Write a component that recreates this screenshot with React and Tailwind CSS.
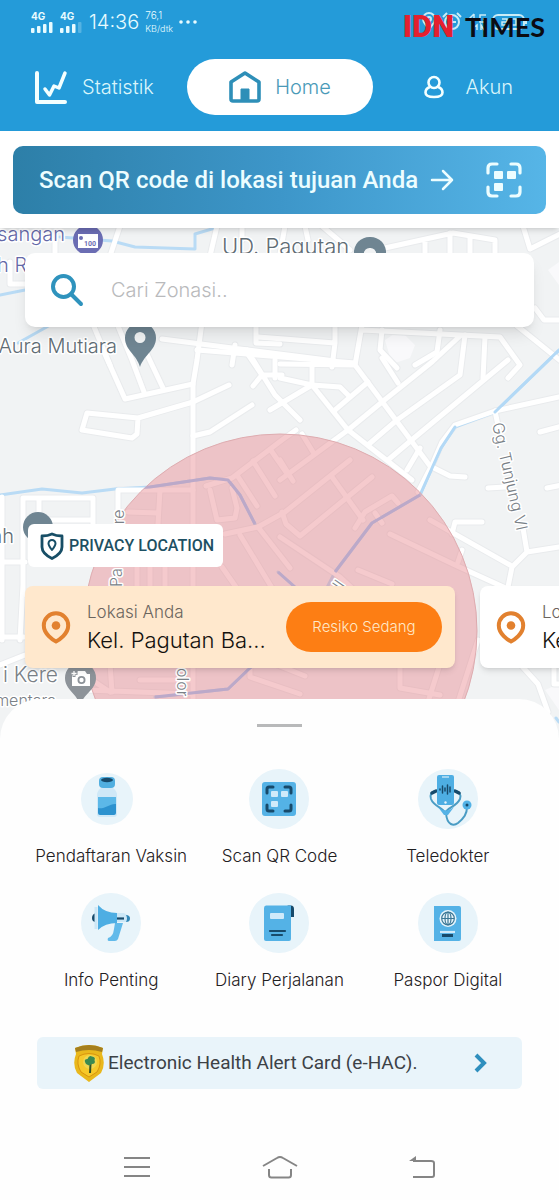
import React from "react";

const water = [
  "M0 495L42 489L82 493L115 489L150 487L210 478L228 480L240 495L255 524",
  "M575 335L495 412L455 427L441 448L420 495L372 523L335 572L300 640",
  "M60 237L112 241L135 247L195 249L195 234L215 228",
  "M0 295L30 289L60 270",
  "M18 343L52 324",
  "M155 697L228 689L250 668L300 630",
  "M278 572L296 588",
  "M556 718L559 722",
];

const roads = [
  "M104 352L125 399L193 384",
  "M118 326L132 360L144 392M92 322L110 365M145 350L163 388",
  "M202 322L197 360L193 384V740",
  "M229 385L193 402L138 418L87 413L82 430L132 438L137 434L138 418",
  "M193 436L210 432L252 405",
  "M23 595V498H93V524M39 498V524M39 520H93M0 562H25M2 497V640M23 585L20 640M0 637H24M0 665L25 655",
  "M118 512V490H193M160 490L158 524M128 512L158 513",
  "M162 339L335 361M256 325V343L280 344M235 345L232 365M197 350L355 363",
  "M258 337L335 343V325M335 343L332 367M275 360V378",
  "M253 386L262 375L245 350M247 350L275 395L300 420M262 375H282",
  "M280 364L355 365L430 466L450 476L465 477",
  "M362 325L355 365M362 330L500 337L520 365L508 378",
  "M382 330L380 350L397 368M440 330L437 352L415 365",
  "M465 335L460 375L397 420M485 337L483 378",
  "M280 378L312 385L340 387L348 395M312 385V366M270 410L312 385L348 430L412 480",
  "M335 410L368 382M280 480L348 430L382 402L432 362L460 336",
  "M369 444L397 420M388 460L414 438L508 360M407 470L420 448M382 358L398 383",
  "M559 397L495 411L455 425L442 442L432 465L418 492",
  "M495 411L500 435M523 528L527 552L559 547M527 552L512 567L507 592",
  "M452 534L455 522H482M430 520L510 565M390 534L455 565L510 590M462 550L458 562",
  "M540 432L562 426M488 488L505 487M547 488L562 485",
  "M385 248L453 233L495 240V254M425 240V254M450 233V254M470 236V254",
  "M285 226L280 254M305 226L308 240M322 226L350 250M523 226L530 249L562 233",
  "M535 308L544 320H562M516 325L562 362",
  "M120 226L110 256M217 226L210 256M242 226V240M55 240V254M10 262V284H28",
  "M206 486L232 478L282 440L296 430M237 475L257 506M253 461L275 496M270 449L286 472",
  "M210 490L217 520L235 518L237 508L232 488M225 534L258 527L285 512L350 460",
  "M240 535L272 588M258 527L290 568M222 567L238 590M282 512L286 524L300 536L372 477",
  "M332 477L363 520M355 528L365 512L392 496L398 503M375 513L382 523M280 537L340 577L365 600",
  "M302 434L313 452M280 460L293 481M358 570L392 584M165 566V590M137 566V590M150 566V590",
  "M110 664L112 692M85 690L192 694M140 680H192M92 680L110 692M250 665V677L300 694M275 664L305 676",
  "M400 664V688L440 695M440 664L428 702M478 640L458 702M520 664L538 684L548 712M554 664V684H562",
];

function CityMap() {
  return (
    <svg
      viewBox="0 228 559 510"
      preserveAspectRatio="xMidYMin slice"
      className="absolute inset-x-0 top-0 h-[510px] w-full bg-[#f1f3f4]"
      role="img"
      aria-label="Peta zonasi"
    >
      <defs>
        <clipPath id="zone"><circle cx="280" cy="631" r="197" /></clipPath>
      </defs>
      <path d="M385 340L400 330L415 345L410 358L392 364Z M548 270L559 262V285Z M545 690L559 684V710Z" fill="#f9f9fb" />
      <g fill="none" strokeLinejoin="round" strokeLinecap="round">
        <g stroke="#e9ebed" strokeWidth="7">
          {roads.map((d) => <path key={d} d={d} />)}
        </g>
        <g stroke="#b9dbf5" strokeWidth="3">
          {water.map((d) => <path key={d} d={d} />)}
        </g>
        <g stroke="#ffffff" strokeWidth="5">
          {roads.map((d) => <path key={d} d={d} />)}
        </g>
        <path d="M559 350L495 412M455 427L441 448L420 495" stroke="#b3d9f6" strokeWidth="3" />
      </g>
      <circle cx="280" cy="631" r="197" fill="#e8848b" fillOpacity="0.43" stroke="#deacb0" strokeWidth="1" />
      <g clipPath="url(#zone)" fill="none" stroke="#bba9c9" strokeWidth="3" strokeLinejoin="round">
        <path d={water[0]} />
        <path d="M420 495L372 523L335 572" />
        <path d={water[5]} />
        <path d={water[6]} />
      </g>
      <g fontFamily="Inter, sans-serif" fontWeight="300" fontSize="20" stroke="#ffffff" strokeWidth="3" paintOrder="stroke" strokeLinejoin="round">
        <text x="65" y="241" textAnchor="end" fill="#6468a8">sangan</text>
        <text x="-3" y="272" fill="#6468a8">h R</text>
        <text x="222" y="254" fontSize="22" fill="#5f6c74">UD. Pagutan</text>
        <text x="117" y="353" textAnchor="end" fill="#5f6c74">Aura Mutiara</text>
        <text x="14" y="543" textAnchor="end" fill="#5f6c74">ah</text>
        <text x="58" y="682" textAnchor="end" fontSize="21" fill="#7a8187">i Kere</text>
        <text x="56" y="706" textAnchor="end" fontSize="16" fill="#7a8187">mentara</text>
        <g fontSize="16" fill="#7a8187">
          <text transform="translate(122 587) rotate(-90)">Pa</text>
          <text transform="translate(124 528) rotate(-90)">ire</text>
          <text transform="translate(177 668) rotate(90)">olor</text>
          <text transform="translate(341 591) rotate(-55)">ll</text>
          <text transform="translate(492 424) rotate(77)">Gg. Tunjung VI</text>
        </g>
      </g>
      <circle cx="88" cy="240" r="15" fill="#6b6db3" />
      <rect x="78" y="234" width="20" height="14" fill="#fff" />
      <circle cx="81" cy="238" r="2" fill="#6b6db3" />
      <text x="84" y="246" fontSize="7" fontFamily="Roboto, sans-serif" fontWeight="700" fill="#6b6db3">100</text>
      <g fill="#6f8592">
        <path fillRule="evenodd" d="M140 367C137 355 125 350 125 338A15.500 15.500 0 0 1 156 338C156 350 144 355 140 367ZM140 343A5.500 5.500 0 1 0 140 332A5.500 5.500 0 0 0 140 343Z" />
        <path fillRule="evenodd" d="M370 237A15.500 15.500 0 0 1 386 254H354A15.500 15.500 0 0 1 370 237ZM370 248A5.500 5.500 0 0 0 364 254H376A5.500 5.500 0 0 0 370 248Z" />
        <circle cx="38" cy="527" r="15" />
      </g>
      <path d="M80 706C78 694 65 690 65 678A15.500 15.500 0 0 1 96 678C96 690 83 694 80 706Z" fill="#8d9399" />
      <path fillRule="evenodd" d="M72 674H76L78 671H85L87 674H90V686H72ZM81.500 684A4 4 0 1 0 81.500 676A4 4 0 0 0 81.500 684Z" fill="#fff" />
      <circle cx="81.500" cy="680" r="2.200" fill="#fff" />
      <path d="M74 670V677M70.500 673.500H77.500" stroke="#8d9399" strokeWidth="3" />
      <path d="M74 671V676M71.500 673.500H76.500" stroke="#fff" strokeWidth="1.300" />
    </svg>
  );
}

function Signal({ weak }) {
  return (
    <span className="flex flex-col gap-px">
      <span className="text-[10px] leading-[10px] font-bold">4G</span>
      <svg viewBox="0 0 23 11" className="h-[11px] w-[23px]" fill="currentColor">
        <rect x="0" y="6" width="3.500" height="5" rx="1" />
        <rect x="6" y="4" width="3.500" height="7" rx="1" />
        <rect x="12" y="2" width="3.500" height="9" rx="1" />
        <rect x="18" y="0" width="3.500" height="11" rx="1" opacity={weak ? 0.25 : 1} />
      </svg>
    </span>
  );
}

function StatusBar() {
  return (
    <div className="relative flex h-11 items-center px-[31px] text-[#e8fbff]">
      <div className="flex items-center gap-[6px]">
        <Signal />
        <Signal weak />
        <span className="text-[20px] leading-6 font-light">14:36</span>
        <span className="flex flex-col text-[9px] leading-[14px] font-light">
          <span className="text-[10px]">76,1</span>
          <span>KB/dtk</span>
        </span>
        <svg viewBox="0 0 18 4" className="h-1 w-[18px]" fill="currentColor">
          <circle cx="2" cy="2" r="1.800" /><circle cx="9" cy="2" r="1.800" /><circle cx="16" cy="2" r="1.800" />
        </svg>
      </div>
      <svg viewBox="0 0 108 22" className="ml-auto h-[22px] w-[108px]" fill="none" stroke="#c9ecf6" strokeWidth="2">
        <path d="M9 19C7 14 3 13 3 8A6 6 0 0 1 15 8C15 13 11 14 9 19Z" />
        <circle cx="9" cy="8" r="2" />
        <circle cx="32" cy="11" r="7" />
        <path d="M32 7V11H36M23 6L27 2M37 2L41 6" />
        <path d="M54 3L48 9H55M54 3V12M66 4H60V11H66V8H63M53 17L57 14V19M61 19V14L64 19" strokeWidth="1.500" />
        <rect x="73" y="4" width="31" height="14" rx="5" />
        <path d="M106 9V13" />
        <path d="M82 8H87V11H82V14H87M91 8H96V14H91Z" strokeWidth="1.500" />
      </svg>
      <div className="absolute top-[11px] right-[14px] flex items-center gap-[11px] leading-8">
        <span className="font-[Roboto] text-[31px] font-black text-[#e4202f]">IDN</span>
        <span className="font-[Lato] text-[27px] font-bold text-[#0b0b12]">TIMES</span>
      </div>
    </div>
  );
}

function TopNav() {
  return (
    <nav className="grid grid-cols-[1fr_186px_1fr] items-center px-[34px] pt-[15px] pb-4 text-[20px] font-light text-[#d9f5fb]">
      <a href="#statistik" className="flex items-center gap-[14px]">
        <svg viewBox="0 0 34 34" className="size-[34px]" fill="none" stroke="#f3ffff" strokeWidth="4" strokeLinecap="round" strokeLinejoin="round">
          <path d="M3 3V32H31" />
          <path d="M11 19L15.500 25L20 16L25 18L31 3" strokeWidth="3.500" />
        </svg>
        Statistik
      </a>
      <a href="#home" className="flex h-14 items-center justify-center gap-[13px] rounded-full bg-white text-[#4a9ab8]">
        <svg viewBox="0 0 34 34" className="size-[34px]" fill="none" stroke="#2e8fb8" strokeWidth="3.600" strokeLinejoin="round">
          <path d="M3 12L17 3L31 12V29Q31 31 29 31H5Q3 31 3 29Z" />
          <path d="M13 31V19H21V31Z" fill="#2e8fb8" strokeWidth="1" />
        </svg>
        Home
      </a>
      <a href="#akun" className="flex items-center justify-end gap-5 pr-3">
        <svg viewBox="0 0 22 24" className="h-6 w-[22px]" fill="none" stroke="#f3ffff" strokeWidth="2.600">
          <circle cx="11" cy="7.500" r="5.500" />
          <path d="M7 12C4 13 2.500 15 2.500 17.500C2.500 20.500 6 22 11 22S19.500 20.500 19.500 17.500C19.500 15 18 13 15 12" />
        </svg>
        Akun
      </a>
    </nav>
  );
}

function ScanBanner() {
  return (
    <div className="relative z-10 bg-white px-[13px] pt-[15px] pb-[14px] shadow-md">
      <button className="flex h-[68px] w-full items-center rounded-[10px] bg-linear-to-r from-[#2d7fa8] via-[#3d96c9] to-[#56b5e7] pr-[23px] pl-[26px] font-[Roboto] text-[24px] font-medium text-[#ecfdff]">
        <span className="whitespace-nowrap">Scan QR code di lokasi tujuan Anda</span>
        <svg viewBox="0 0 24 22" className="ml-3 h-[22px] w-6 shrink-0" fill="none" stroke="currentColor" strokeWidth="2.500" strokeLinecap="round" strokeLinejoin="round">
          <path d="M2 11H22M13 2L22 11L13 20" />
        </svg>
        <svg viewBox="0 0 38 38" className="ml-auto size-[38px] shrink-0" fill="none" stroke="currentColor" strokeWidth="3.200" strokeLinecap="round">
          <path d="M3 12V7Q3 3 7 3H12M26 3H31Q35 3 35 7V12M35 26V31Q35 35 31 35H26M12 35H7Q3 35 3 31V26" />
          <g fill="currentColor" stroke="none">
            <rect x="9" y="10" width="9" height="8" rx="1" /><rect x="22" y="10" width="9" height="8" rx="1" /><rect x="9" y="22" width="9" height="8" rx="1" />
          </g>
        </svg>
      </button>
    </div>
  );
}

function OrangePin() {
  return (
    <svg viewBox="0 0 30 33" className="h-[33px] w-[30px] shrink-0" fill="none">
      <path d="M15 30.500C12 29 2.800 23 2.800 14.500A12.200 12.200 0 0 1 27.200 14.500C27.200 23 18 29 15 30.500Z" stroke="#e2812f" strokeWidth="4" strokeLinejoin="round" />
      <circle cx="15" cy="14.500" r="4.300" fill="#e2812f" />
    </svg>
  );
}

function LocationCard({ active, title, name, risk }) {
  return (
    <li className={`flex h-[82px] w-[430px] shrink-0 items-center rounded-lg pr-[13px] pl-4 shadow-md ${active ? "bg-[#ffe8cd]" : "bg-white"}`}>
      <OrangePin />
      <div className="ml-4 min-w-0 flex-1 pt-[2px]">
        <p className="text-[17px] leading-6 font-light text-[#6b655e]">{title}</p>
        <p className="text-[22px] leading-8 font-light whitespace-nowrap text-[#14110e]">{name}</p>
      </div>
      {risk && (
        <button className="ml-3 h-[50px] w-[156px] shrink-0 rounded-full bg-[#fd7e14] text-[15px] font-light text-[#ffe9c9]">{risk}</button>
      )}
    </li>
  );
}

function MapSection() {
  return (
    <section className="relative overflow-x-clip">
      <CityMap />
      <div className="relative flex flex-col items-start pt-[25px] pb-[31px]">
        <label className="mx-[25px] flex h-[74px] items-center gap-[27px] self-stretch rounded-[10px] bg-white pr-4 pl-[25px] shadow-lg">
          <svg viewBox="0 0 34 34" className="size-[34px] shrink-0" fill="none" stroke="#2f93bd" strokeWidth="4" strokeLinecap="round">
            <circle cx="13.500" cy="13.500" r="10.500" />
            <path d="M21 21L31 31" />
          </svg>
          <span className="sr-only">Cari zonasi</span>
          <input type="text" placeholder="Cari Zonasi.." className="min-w-0 flex-1 text-[20px] font-light text-gray-700 outline-none placeholder:text-[#b9babc]" />
        </label>
        <button className="mt-[197px] ml-7 flex h-[43px] items-center gap-[5px] rounded-md bg-white pr-[9px] pl-3 font-[Roboto] text-[16px] font-medium text-[#1d5063]">
          <svg viewBox="0 0 24 28" className="h-7 w-6" fill="none" stroke="#174e66" strokeWidth="2.800" strokeLinejoin="round">
            <path d="M12 2C9 3.500 5 4 2 4V15C2 21 7 24 12 26.500C17 24 22 21 22 15V4C19 4 15 3.500 12 2Z" />
            <path d="M12 18C10 15.500 8.500 13.500 8.500 11.500A3.500 3.500 0 0 1 15.500 11.500C15.500 13.500 14 15.500 12 18Z" strokeWidth="2" />
          </svg>
          PRIVACY LOCATION
        </button>
        <ul className="mt-[19px] flex gap-[25px] pl-[25px]">
          <LocationCard active title="Lokasi Anda" name="Kel. Pagutan Ba..." risk="Resiko Sedang" />
          <LocationCard title="Lokasi" name="Kel." />
        </ul>
      </div>
    </section>
  );
}

function VaccineIcon() {
  return (
    <svg viewBox="0 0 60 60" className="size-[60px]">
      <circle cx="26" cy="30" r="26" fill="#e8f4fa" />
      <rect x="18" y="8" width="16" height="11" rx="4" fill="#51afe0" />
      <ellipse cx="26" cy="11" rx="6" ry="2.200" fill="#174a6b" />
      <path d="M20 19H32Q36 22 36 26V45Q36 48 33 48H19Q16 48 16 45V26Q16 22 20 19Z" fill="#cfe8f7" />
      <path d="M17 28H35V44Q35 46 33 46H19Q17 46 17 44Z" fill="#2c92cf" />
      <path d="M17 28H35V35C29 34 23 41 17 39Z" fill="#5cb8e8" />
    </svg>
  );
}

function QrIcon() {
  return (
    <svg viewBox="0 0 60 60" className="size-[60px]">
      <circle cx="30" cy="30" r="30" fill="#e8f4fa" />
      <rect x="13" y="13" width="34" height="34" rx="3" fill="#54b2e6" />
      <path d="M18 24V20Q18 18 20 18H24M36 18H40Q42 18 42 20V24M42 36V40Q42 42 40 42H36M24 42H20Q18 42 18 40V36" fill="none" stroke="#174a6b" strokeWidth="3" strokeLinecap="round" />
      <g fill="#cfeafa"><rect x="22" y="22" width="7" height="6" rx="1" /><rect x="32" y="22" width="7" height="6" rx="1" /><rect x="22" y="32" width="7" height="6" rx="1" /></g>
    </svg>
  );
}

function DoctorIcon() {
  return (
    <svg viewBox="0 0 60 60" className="size-[60px]">
      <circle cx="30" cy="30" r="30" fill="#e8f4fa" />
      <g fill="none" stroke="#4a9cc4" strokeWidth="2" strokeLinecap="round" strokeLinejoin="round">
        <path d="M17 22Q11 24 13 30C16 38 25 38 27 44C30 38 38 38 42 30Q44 24 38 22" />
        <path d="M28 44C29 57 36 57 40 54C46 49 49 45 49 38" />
      </g>
      <path d="M20 38Q28 45 36 38L30 46H26Z" fill="#54b2e6" />
      <path d="M14 24L18 22M37 22L41 24" stroke="#174a6b" strokeWidth="3.500" strokeLinecap="round" />
      <rect x="19" y="6" width="17" height="30" rx="2" fill="#4eaee3" />
      <path d="M24 8H31" stroke="#d8effa" strokeWidth="1.200" />
      <circle cx="27.500" cy="33.500" r="1.200" fill="#e6f4fb" />
      <path d="M22 20V21M24.500 17V24M27 19V22M29.500 16V25M32 18V23" stroke="#174a6b" strokeWidth="1.500" strokeLinecap="round" />
      <circle cx="49" cy="36" r="4.500" fill="#54b2e6" />
      <circle cx="49" cy="36" r="1.500" fill="#174a6b" />
    </svg>
  );
}

function MegaphoneIcon() {
  return (
    <svg viewBox="0 0 60 60" className="size-[60px]">
      <circle cx="30" cy="30" r="30" fill="#e8f4fa" />
      <path d="M15 20Q11 21 11 25T15 29Z" fill="#174a6b" />
      <path d="M34 30H42L37 46Q36 48 34 48H28Q26 48 27 45Q32 44 33 36Z" fill="#62baea" />
      <path d="M15 14V36" stroke="#cce7f6" strokeWidth="3" />
      <path d="M17 12Q24 20 36 20V30Q24 30 17 37Z" fill="#4eaee3" />
      <path d="M36 20H43L46 22V29H36Z" fill="#cce7f6" />
      <path d="M36 25.500H43" stroke="#174a6b" strokeWidth="2.200" />
      <path d="M45 22Q49 22 49 25.500T45 29Q47 25.500 45 22Z" fill="#3388b8" />
    </svg>
  );
}

function DiaryIcon() {
  return (
    <svg viewBox="0 0 60 60" className="size-[60px]">
      <circle cx="30" cy="30" r="30" fill="#e8f4fa" />
      <path d="M38 12.500H42Q45 12.500 45 16V24H41V16Q41 13 38 12.500Z" fill="#174a6b" />
      <path d="M17 12.500H42V46Q42 48 40 48H17Q15 48 15 46V15Q15 12.500 17 12.500Z" fill="#54b2e6" />
      <rect x="21" y="20" width="14" height="6" rx="1" fill="#cfeafa" />
      <path d="M21 38H36M23 42H33" stroke="#174a6b" strokeWidth="2.200" strokeLinecap="round" />
    </svg>
  );
}

function PassportIcon() {
  return (
    <svg viewBox="0 0 60 60" className="size-[60px]">
      <circle cx="30" cy="30" r="30" fill="#e8f4fa" />
      <path d="M16 13H41Q43 13 43 15V46Q43 48 41 48H16Z" fill="#54b2e6" />
      <circle cx="30" cy="25.500" r="8.500" fill="#e6f4fb" />
      <g fill="none" stroke="#3b7795" strokeWidth="1.200"><circle cx="30" cy="25.500" r="6.300" /><ellipse cx="30" cy="25.500" rx="3" ry="6.300" /><path d="M24 25.500H36M30 19V32" /></g>
      <path d="M22 39H37" stroke="#cfeafa" strokeWidth="2.200" />
      <path d="M24 42.500H35" stroke="#174a6b" strokeWidth="3" />
    </svg>
  );
}

const services = [
  { label: "Pendaftaran Vaksin", Icon: VaccineIcon },
  { label: "Scan QR Code", Icon: QrIcon },
  { label: "Teledokter", Icon: DoctorIcon },
  { label: "Info Penting", Icon: MegaphoneIcon },
  { label: "Diary Perjalanan", Icon: DiaryIcon },
  { label: "Paspor Digital", Icon: PassportIcon },
];

function Crest() {
  return (
    <svg viewBox="0 0 32 38" className="h-[38px] w-8 shrink-0">
      <path d="M2 4Q16 -2 30 4L29 10Q33 20 28 29L16 38L4 29Q-1 20 3 10Z" fill="#e9b81c" />
      <path d="M2 4Q16 -2 30 4L29 8Q16 4 3 8Z" fill="#a57f1e" />
      <path d="M6 12Q16 7 26 12Q29 20 24 28L16 33L8 28Q3 20 6 12Z" fill="#f6c92a" stroke="#d9940e" strokeWidth="1" />
      <circle cx="17" cy="18" r="7" fill="#f0d650" />
      <path d="M17 29L17.500 20" stroke="#345226" strokeWidth="2" />
      <path d="M12 18Q11 15 14.500 15Q16 11 19 12.500Q23 13 21.500 16Q23 20 19 20L16 21.500L13 20Z" fill="#3b8a50" />
    </svg>
  );
}

function BottomSheet() {
  return (
    <section className="relative rounded-t-[40px] bg-[#fefefe] pt-[25px]">
      <div className="mx-auto h-[3px] w-[45px] bg-[#b8b9ba]" />
      <div className="grid grid-cols-3 gap-y-[25px] px-[27px] pt-[42px]">
        {services.map(({ label, Icon }) => (
          <button key={label} className="flex flex-col items-center gap-[15px] text-[17px] leading-[24px] font-light whitespace-nowrap text-[#1f2022]">
            <Icon />
            {label}
          </button>
        ))}
      </div>
      <a href="#ehac" className="mx-[37px] mt-[45px] flex h-[52px] items-center rounded-md bg-[#e9f4fa] pr-[34px] pl-9 font-[Roboto] text-[19px] text-[#3c4146]">
        <Crest />
        <span className="ml-[3px] whitespace-nowrap">Electronic Health Alert Card (e-HAC).</span>
        <svg viewBox="0 0 14 20" className="ml-auto h-5 w-[14px]" fill="none" stroke="#2f8fbe" strokeWidth="4">
          <path d="M2 2L10 10L2 18" />
        </svg>
      </a>
      <nav className="flex items-center justify-between px-[117px] pt-[58px] pb-[12px]">
        <button aria-label="Menu" className="flex size-10 items-center justify-center">
          <svg viewBox="0 0 26 22" className="h-[22px] w-[26px]" fill="none" stroke="#858585" strokeWidth="2"><path d="M0 2H26M0 11H26M0 20H26" /></svg>
        </button>
        <button aria-label="Beranda" className="flex size-10 items-center justify-center">
          <svg viewBox="0 0 36 24" className="h-6 w-9" fill="none" stroke="#858585" strokeWidth="2" strokeLinejoin="round"><path d="M1 11L15 3Q18 1 21 3L35 11M7 14V20Q7 22.500 9.500 22.500H26.500Q29 22.500 29 20V14" /></svg>
        </button>
        <button aria-label="Kembali" className="flex size-10 items-center justify-center">
          <svg viewBox="0 0 28 24" className="h-6 w-7" fill="none" stroke="#858585" strokeWidth="2" strokeLinejoin="round"><path d="M5 6H23Q26 6 26 8V20Q26 22 24 22H5" /><path d="M1 6L8 1V6Z" fill="#858585" stroke="none" /></svg>
        </button>
      </nav>
    </section>
  );
}

export default function App() {
  return (
    <main className="min-h-screen bg-[#fefefe] font-[Inter,sans-serif]">
      <header className="bg-[#249bd9]">
        <StatusBar />
        <TopNav />
      </header>
      <ScanBanner />
      <MapSection />
      <BottomSheet />
    </main>
  );
}
